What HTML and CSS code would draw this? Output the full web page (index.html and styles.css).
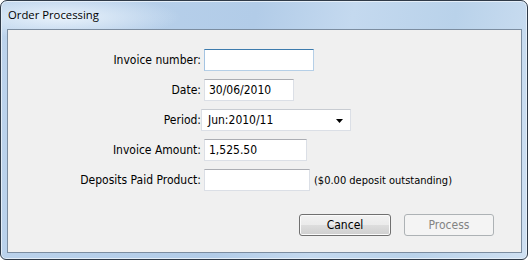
FILE: index.html
```html
<!DOCTYPE html>
<html lang="en">
<head>
    <meta charset="UTF-8">
    <title>Order Processing</title>
    <link rel="stylesheet" href="styles.css">
</head>
<body>
<div class="window">
    <div class="titlebar">
        <span class="title">Order Processing</span>
    </div>
    <div class="client">
        <form class="fields">
            <label class="label" for="invoiceNumber">Invoice number:</label>
            <div class="field"><input type="text" id="invoiceNumber" class="text focused w110"></div>

            <label class="label" for="date">Date:</label>
            <div class="field"><input type="text" id="date" class="text w90" value="30/06/2010"></div>

            <label class="label" for="period">Period:</label>
            <div class="field">
                <div class="select" id="period">
                    <span>Jun:2010/11</span>
                    <svg class="arrow" width="7" height="4" viewBox="0 0 7 4"><path d="M0 0h7L3.5 4z" fill="#000"/></svg>
                </div>
            </div>

            <label class="label" for="amount">Invoice Amount:</label>
            <div class="field"><input type="text" id="amount" class="text w103" value="1,525.50"></div>

            <label class="label" for="deposits">Deposits Paid Product:</label>
            <div class="field">
                <input type="text" id="deposits" class="text w106">
                <span class="note">($0.00 deposit outstanding)</span>
            </div>
        </form>
        <div class="buttons">
            <button type="button" class="btn">Cancel</button>
            <button type="button" class="btn" disabled>Process</button>
        </div>
    </div>
</div>
</body>
</html>
```

FILE: styles.css
```css
body {
    margin: 0;
    font-family: "DejaVu Sans Condensed", "DejaVu Sans", sans-serif;
    font-size: 12px;
    color: #000;
    background: #fff;
}
.window {
    box-sizing: border-box;
    width: 528px;
    height: 260px;
    border: 1px solid #2f3a48;
    border-radius: 7px 7px 6px 6px;
    background:
        radial-gradient(ellipse 120px 22px at 60px 16px, rgba(235, 244, 252, 0.95), rgba(235, 244, 252, 0) 100%),
        linear-gradient(100deg, #bcd3ec 0%, #b2cce8 45%, #c4d9ef 62%, #b9d2ea 80%, #cfe0f2 100%);
    box-shadow: inset 0 0 0 1px #e4eef8;
    display: flex;
    flex-direction: column;
}
.titlebar {
    height: 28px;
    padding-left: 7px;
    display: flex;
    align-items: center;
}
.title {
    font-family: "Open Sans", "Noto Sans", sans-serif;
    font-size: 11.3px;
    color: #000;
    margin-top: -1px;
}
.client {
    box-sizing: border-box;
    height: 224px;
    margin: 0 5px 0 6px;
    border: 1px solid #7c8da0;
    background: #f0f0f0;
    display: flex;
    flex-direction: column;
}
.fields {
    display: grid;
    grid-template-columns: 193px auto;
    column-gap: 3px;
    row-gap: 8px;
    margin-top: 19px;
}
.label {
    text-align: right;
    align-self: center;
}
.field {
    display: flex;
    align-items: center;
    height: 22px;
}
.text {
    box-sizing: border-box;
    height: 22px;
    margin: 0;
    padding: 0 4px;
    border: 1px solid #dbdfe6;
    border-top-color: #abadb3;
    background: #fff;
    font: inherit;
    outline: none;
}
.text.focused {
    border-color: #b5cfe7;
    border-top-color: #3d7bad;
    border-left-color: #a4c4e2;
}
.w110 { width: 110px; }
.w90 { width: 90px; }
.w103 { width: 103px; }
.w106 { width: 106px; }
.select {
    box-sizing: border-box;
    width: 150px;
    height: 22px;
    margin-left: -3px;
    padding: 0 6px 0 6px;
    border: 1px solid #dbdfe6;
    border-top-color: #c8ccd2;
    background: #fff;
    display: flex;
    align-items: center;
    justify-content: space-between;
}
.arrow {
    margin-top: 1px;
    margin-right: 1px;
}
.note {
    margin-left: 4px;
    font-size: 11px;
}
.buttons {
    display: flex;
    justify-content: flex-end;
    gap: 13px;
    margin-top: auto;
    margin-bottom: 16px;
    padding-right: 27px;
}
.btn {
    box-sizing: border-box;
    height: 22px;
    width: 92px;
    padding: 0;
    border: 1px solid #707070;
    border-radius: 3px;
    background: linear-gradient(#f2f2f2 0%, #ebebeb 50%, #dddddd 51%, #cfcfcf 100%);
    box-shadow: inset 0 0 0 1px #fbfbfb;
    font: inherit;
    color: #000;
}
.btn:disabled {
    width: 90px;
    border-color: #adb2b5;
    background: #f4f4f4;
    box-shadow: none;
    color: #838383;
}
```
